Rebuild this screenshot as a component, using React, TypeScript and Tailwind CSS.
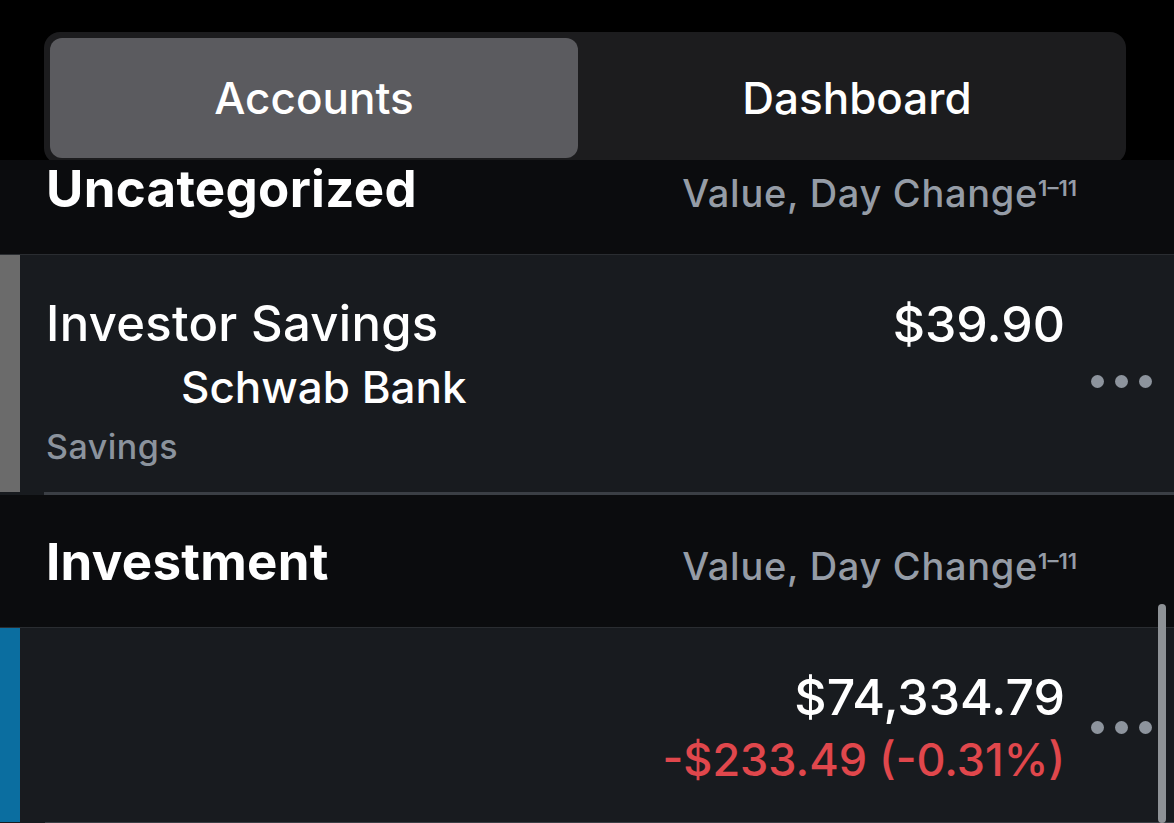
import React from 'react';

type Header = { title: string };

function SectionHeader({ title }: Header): React.ReactElement {
  return (
    <div className="flex h-[132px] items-center pl-[46px] pr-[97px]">
      <div className="flex flex-1 items-baseline justify-between">
        <span className="text-[51px] font-bold leading-none tracking-[0.3px] text-white">{title}</span>
        <span className="text-[38px] font-medium leading-none tracking-[0.7px] text-[#959ca6]">
          Value, Day Change
          <sup className="text-[22px] font-semibold tracking-normal">1–11</sup>
        </span>
      </div>
    </div>
  );
}

function Dots(): React.ReactElement {
  return (
    <div className="ml-[26px] mr-[22px] flex gap-[11px] self-center">
      <span className="h-[13px] w-[13px] rounded-full bg-[#8d949d]" />
      <span className="h-[13px] w-[13px] rounded-full bg-[#8d949d]" />
      <span className="h-[13px] w-[13px] rounded-full bg-[#8d949d]" />
    </div>
  );
}

export default function App(): React.ReactElement {
  return (
    <div className="relative h-[823px] w-[1174px] overflow-hidden bg-[#0b0c0e] font-['Inter']">
      {/* segmented control */}
      <div className="relative z-10 h-[160px] overflow-hidden bg-black pl-[44px] pr-[48px] pt-[32px]">
        <div className="flex h-[132px] rounded-[16px] bg-[#1c1c1e] p-[6px]">
          <div className="flex h-[120px] w-[528px] items-center justify-center rounded-[12px] bg-[#5b5b5f] text-[44px] font-medium text-white">
            Accounts
          </div>
          <div className="flex h-[120px] flex-1 items-center justify-center pl-[16px] text-[44px] font-medium text-white">
            Dashboard
          </div>
        </div>
      </div>

      <div className="-mt-[38px]">
        <SectionHeader title="Uncategorized" />

        <div className="border-t border-[#2a2d31] bg-[#181b1f]">
          <div className="flex">
            <div className="w-[20px] bg-[#6b6b6b]" />
            <div className="flex flex-1 pb-[28px] pl-[26px] pt-[44px]">
              <div className="flex flex-1 flex-col">
                <span className="text-[49px] font-medium leading-none tracking-[0.3px] text-white">
                  Investor Savings
                </span>
                <span className="ml-[135px] mt-[17px] text-[44px] font-medium leading-none text-white">
                  Schwab Bank
                </span>
                <span className="mt-[21px] text-[34px] font-medium leading-none tracking-[0.5px] text-[#8b939d]">
                  Savings
                </span>
              </div>
              <div className="text-right text-[50px] font-medium leading-none text-white">$39.90</div>
              <Dots />
            </div>
          </div>
          <div className="ml-[44px] h-[3px] bg-[#3b3f45]" />
        </div>

        <SectionHeader title="Investment" />

        <div className="border-t border-[#2a2d31] bg-[#181b1f]">
          <div className="flex">
            <div className="w-[20px] bg-[#0b6ea0]" />
            <div className="flex flex-1 pb-[40px] pl-[26px] pt-[44px]">
              <div className="flex-1" />
              <div className="flex flex-col items-end">
                <span className="text-[50px] font-medium leading-none text-white">$74,334.79</span>
                <span className="mt-[15px] text-[45px] font-medium leading-none text-[#e0474c]">
                  -$233.49 (-0.31%)
                </span>
              </div>
              <Dots />
            </div>
          </div>
          <div className="ml-[45px] h-[2px] bg-[#3b3f45]" />
        </div>
      </div>

      <div className="absolute bottom-0 right-[8px] top-[604px] w-[8px] rounded-full bg-[#8e9296]" />
    </div>
  );
}
